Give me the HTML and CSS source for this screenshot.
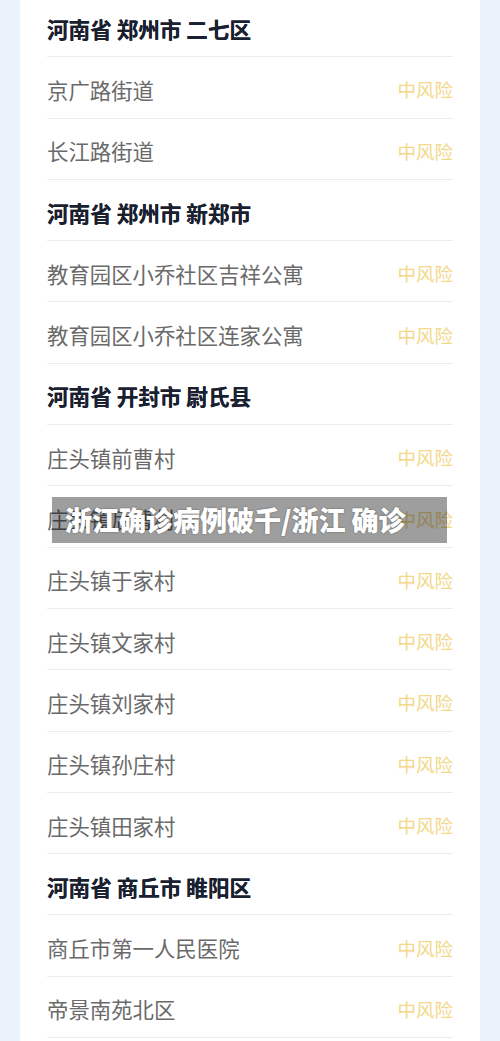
FILE: index.html
```html
<!DOCTYPE html>
<html lang="zh-CN">
<head>
<meta charset="utf-8">
<title>风险地区</title>
<link rel="stylesheet" href="styles.css">
</head>
<body>
<div class="card">
  <div class="row head">河南省 郑州市 二七区</div>
  <div class="row"><span class="name">京广路街道</span><span class="risk">中风险</span></div>
  <div class="row"><span class="name">长江路街道</span><span class="risk">中风险</span></div>
  <div class="row head">河南省 郑州市 新郑市</div>
  <div class="row"><span class="name">教育园区小乔社区吉祥公寓</span><span class="risk">中风险</span></div>
  <div class="row"><span class="name">教育园区小乔社区连家公寓</span><span class="risk">中风险</span></div>
  <div class="row head">河南省 开封市 尉氏县</div>
  <div class="row"><span class="name">庄头镇前曹村</span><span class="risk">中风险</span></div>
  <div class="row"><span class="name">庄头镇后曹村</span><span class="risk">中风险</span></div>
  <div class="row"><span class="name">庄头镇于家村</span><span class="risk">中风险</span></div>
  <div class="row"><span class="name">庄头镇文家村</span><span class="risk">中风险</span></div>
  <div class="row"><span class="name">庄头镇刘家村</span><span class="risk">中风险</span></div>
  <div class="row"><span class="name">庄头镇孙庄村</span><span class="risk">中风险</span></div>
  <div class="row"><span class="name">庄头镇田家村</span><span class="risk">中风险</span></div>
  <div class="row head">河南省 商丘市 睢阳区</div>
  <div class="row"><span class="name">商丘市第一人民医院</span><span class="risk">中风险</span></div>
  <div class="row"><span class="name">帝景南苑北区</span><span class="risk">中风险</span></div>
</div>
<div class="banner">浙江确诊病例破千/浙江 确诊</div>
</body>
</html>
```
FILE: styles.css
```css
html, body {
  margin: 0;
  padding: 0;
}
body {
  background: #eaf2fc;
  font-family: "Noto Sans CJK SC", "Noto Sans", sans-serif;
  height: 1041px;
  overflow: hidden;
}
.card {
  background: #ffffff;
  margin: -4px 20px 0 20px;
  padding: 0 27px 40px 27px;
}
.row {
  box-sizing: border-box;
  height: 61.3px;
  border-bottom: 1px solid #ececec;
  display: flex;
  align-items: center;
  justify-content: space-between;
  padding-top: 4px;
}
.name {
  font-size: 21.4px;
  color: #6a6a6a;
}
.risk {
  font-size: 18.5px;
  color: #f2d888;
}
.head {
  font-size: 21.6px;
  font-weight: 700;
  color: #1a2030;
  text-shadow: 0 0 0.4px #1a2030;
}
.banner {
  position: absolute;
  left: 52px;
  top: 497px;
  width: 395px;
  height: 46px;
  box-sizing: border-box;
  padding-left: 13px;
  background: rgba(0, 0, 0, 0.38);
  color: #ffffff;
  font-size: 27px;
  font-weight: 900;
  line-height: 46px;
  white-space: nowrap;
  text-shadow: 0 0 2px rgba(0, 0, 0, 0.45), 0 0 0.6px #ffffff;
}
```
